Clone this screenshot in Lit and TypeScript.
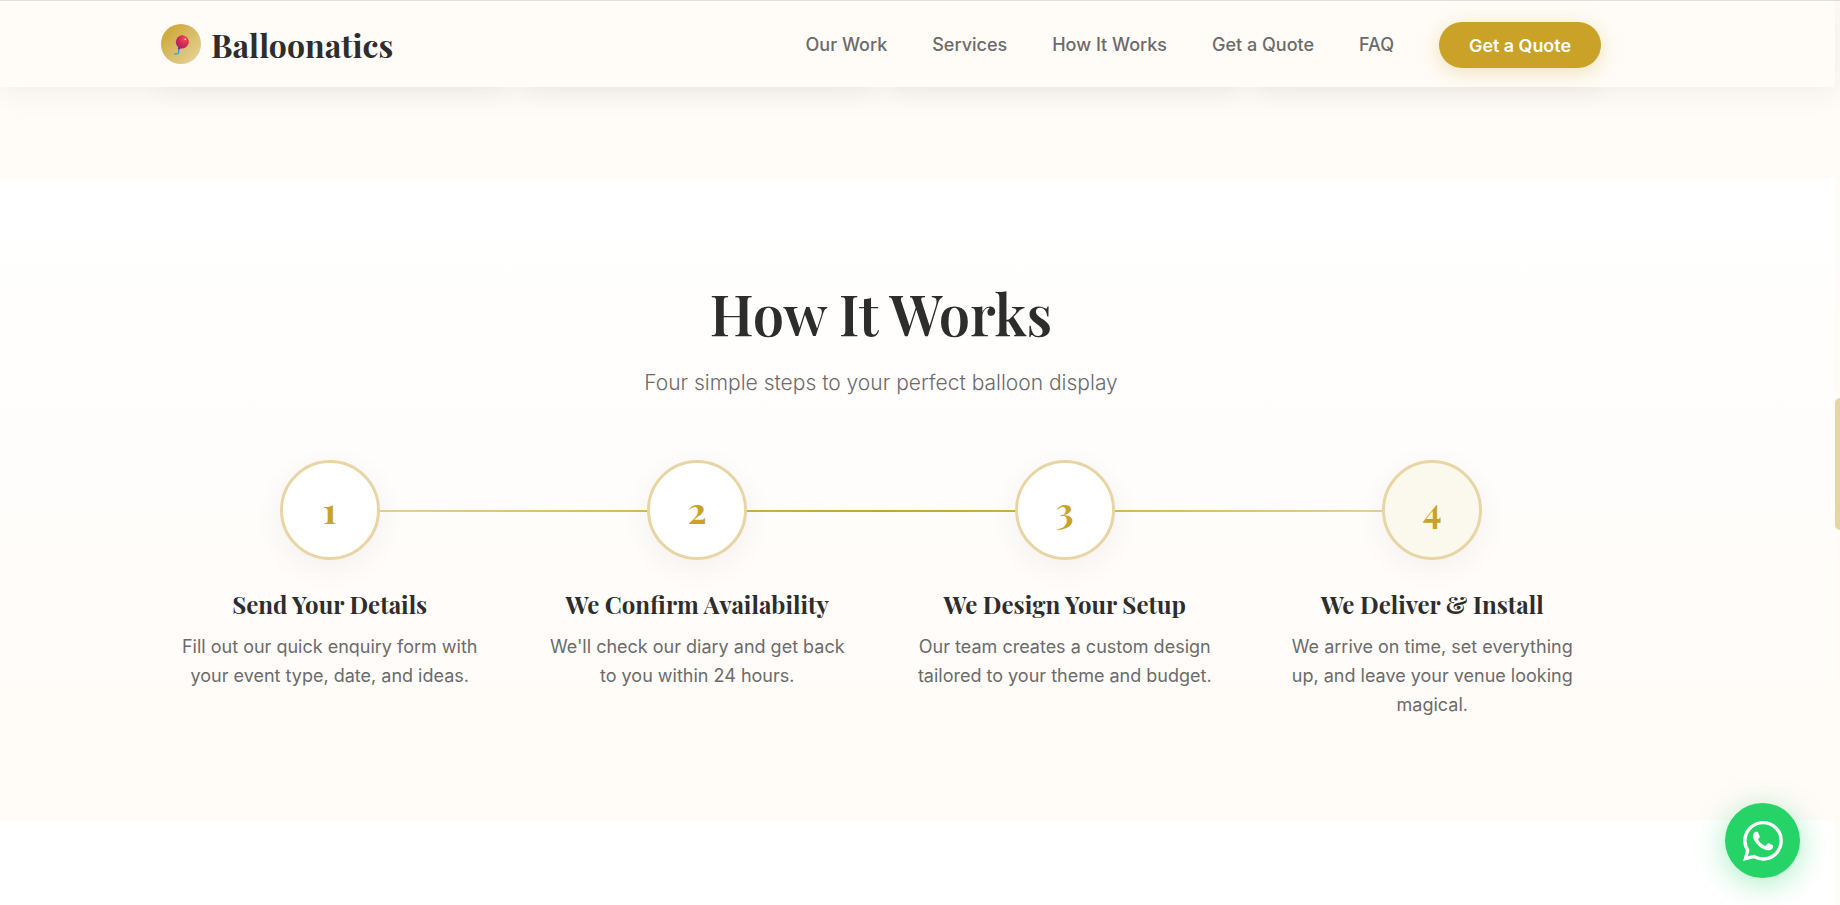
import { LitElement, html, css, svg } from "lit";
import { customElement } from "lit/decorators.js";

const LINKS = ["Our Work", "Services", "How It Works", "Get a Quote", "FAQ"];

const STEPS = [
  { n: "1", cls: "one", title: "Send Your Details", text: "Fill out our quick enquiry form with your event type, date, and ideas." },
  { n: "2", cls: "two", title: "We Confirm Availability", text: "We'll check our diary and get back to you within 24 hours." },
  { n: "3", cls: "three", title: "We Design Your Setup", text: "Our team creates a custom design tailored to your theme and budget." },
  { n: "4", cls: "four", title: "We Deliver & Install", text: "We arrive on time, set everything up, and leave your venue looking magical." },
];

const balloon = svg`
  <defs>
    <radialGradient id="b" cx="0.6" cy="0.25" r="0.8">
      <stop offset="0" stop-color="#f4485a"/><stop offset="0.5" stop-color="#d92a4c"/><stop offset="1" stop-color="#97257c"/>
    </radialGradient>
  </defs>
  <path d="M5.2 14.5 C4.6 16.5 5.6 18.6 4.4 19.6 C3.4 20.4 2 19.6 0.2 20" fill="none" stroke="#3b96f0" stroke-width="1.5"/>
  <path d="M4.6 12.2 L7 13.4 L6.4 15.4 L4 14.8Z" fill="#8c2a86"/>
  <ellipse cx="8.8" cy="7.2" rx="6.8" ry="7" fill="url(#b)" transform="rotate(18 8.8 7.2)"/>
  <ellipse cx="12" cy="4.4" rx="1.1" ry="0.9" fill="#ffd9dd"/>`;

@customElement("app-root")
export class AppRoot extends LitElement {
  static styles = css`
    :host {
      display: block; position: relative; height: 905px; overflow: hidden;
      background: #fff; font-family: Inter, sans-serif; color: #2d2d2d;
    }
    .page { display: flex; flex-direction: column; width: 1835px; height: 905px; }
    header {
      box-sizing: border-box; height: 87px; flex: none; position: relative; z-index: 2;
      display: flex; align-items: center; justify-content: space-between;
      padding: 0 234px 0 161px; border-top: 1px solid #dfdfdd; background: #fffcf7;
      box-shadow: 0 4px 30px rgba(45, 45, 45, 0.07);
    }
    .brand { display: flex; align-items: center; gap: 10px; height: 86px; }
    .mark {
      width: 40px; height: 40px; border-radius: 50%; display: grid; place-items: center;
      background: linear-gradient(135deg, #c9a227, #e8d5a3);
    }
    .mark svg { width: 16px; height: 20px; margin-top: 2px; margin-left: 1px; }
    .name, h2, h3, .num { font-family: "Playfair Display", "Liberation Serif", serif; font-weight: 700; }
    .name { font-size: 32px; line-height: 40px; padding-top: 2px; }
    nav { display: flex; align-items: center; gap: 45px; font-size: 18px; font-weight: 500; color: #6b6b6b; }
    .cta {
      box-sizing: border-box; width: 162px; height: 46px; border-radius: 23px; display: grid; place-items: center;
      margin-top: 2px; background: #c9a227; color: #fff; font-weight: 600; font-size: 17.9px;
      box-shadow: 0 4px 20px rgba(201, 162, 39, 0.3);
    }
    .prev {
      height: 91px; flex: none; background: #fffcf7; overflow: hidden;
      display: grid; grid-template-columns: repeat(4, 1fr); gap: 27px; padding: 0 234px 0 161px; box-sizing: border-box;
    }
    .card { height: 20px; margin-top: -30px; border-radius: 20px; box-shadow: 0 8px 30px rgba(45, 45, 45, 0.08); }
    .how {
      box-sizing: border-box; height: 642px; flex: none; padding: 97px 234px 0 161px; text-align: center;
      background: linear-gradient(180deg, #ffffff 0%, #fffbf7 100%);
    }
    h2 { margin: 0; font-size: 56px; font-weight: 600; line-height: 76px; }
    .sub { margin: 13px 0 0; font-size: 21px; font-weight: 300; line-height: 37px; color: #6b6b6b; }
    .steps {
      display: grid; grid-template-columns: repeat(4, 1fr); gap: 30px; margin-top: 59px; position: relative;
    }
    .line {
      position: absolute; top: 50px; left: 168px; right: 168px; height: 2px;
      background: linear-gradient(90deg, #e8d5a3, #c9a227, #e8d5a3);
    }
    .step { display: flex; flex-direction: column; align-items: center; position: relative; }
    .circle {
      box-sizing: border-box; width: 100px; height: 100px; border-radius: 50%; border: 3px solid #e8d5a3; background: #fff;
      display: grid; place-items: center; color: #c9a227; box-shadow: 0 8px 30px rgba(45, 45, 45, 0.06);
    }
    .circle.four { background: #fbf9ee; }
    .num { font-size: 36px; line-height: 48px; padding-bottom: 2px; }
    h3 { margin: 29px 0 0; font-size: 24px; line-height: 30px; white-space: nowrap; }
    .step p { margin: 13px 0 0; padding: 0 18px; font-size: 18px; line-height: 29.07px; color: #6b6b6b; }
    .track {
      box-sizing: border-box; border-top: 1px solid #dfdfdd;
      position: absolute; top: 0; right: 0; width: 5px; height: 905px; background: #fffcf7;
    }
    .thumb { margin-top: 397px; height: 132px; border-radius: 5px 0 0 5px; background: #e8d5a3; }
    .chat {
      position: absolute; left: 1725px; top: 803px; width: 75px; height: 75px; border-radius: 50%; z-index: 3;
      background: #25d366; display: grid; place-items: center; box-shadow: 0 5px 30px rgba(37, 211, 102, 0.4);
    }
    .chat svg { width: 40px; height: 40px; fill: #fff; }
  `;

  render() {
    return html`
      <div class="page">
        <header>
          <div class="brand">
            <div class="mark"><svg viewBox="0 0 17 21">${balloon}</svg></div>
            <div class="name">Balloonatics</div>
          </div>
          <nav>${LINKS.map((l) => html`<span>${l}</span>`)}<span class="cta">Get a Quote</span></nav>
        </header>
        <div class="prev">${STEPS.map(() => html`<div class="card"></div>`)}</div>
        <section class="how">
          <h2>How It Works</h2>
          <p class="sub">Four simple steps to your perfect balloon display</p>
          <div class="steps">
            <div class="line"></div>
            ${STEPS.map((s) => html`
              <div class="step">
                <div class="circle ${s.cls}"><span class="num">${s.n}</span></div>
                <h3>${s.title}</h3>
                <p>${s.text}</p>
              </div>`)}
          </div>
        </section>
      </div>
      <div class="track"><div class="thumb"></div></div>
      <div class="chat">
        <svg viewBox="0 0 24 24"><path d="M17.472 14.382c-.297-.149-1.758-.867-2.03-.967-.273-.099-.471-.148-.67.15-.197.297-.767.966-.94 1.164-.173.199-.347.223-.644.075-.297-.15-1.255-.463-2.39-1.475-.883-.788-1.48-1.761-1.653-2.059-.173-.297-.018-.458.13-.606.134-.133.298-.347.446-.52.149-.174.198-.298.298-.497.099-.198.05-.371-.025-.52-.075-.149-.669-1.612-.916-2.207-.242-.579-.487-.5-.669-.51-.173-.008-.371-.01-.57-.01-.198 0-.52.074-.792.372-.272.297-1.04 1.016-1.04 2.479 0 1.462 1.065 2.875 1.213 3.074.149.198 2.096 3.2 5.077 4.487.709.306 1.262.489 1.694.625.712.227 1.36.195 1.871.118.571-.085 1.758-.719 2.006-1.413.248-.694.248-1.289.173-1.413-.074-.124-.272-.198-.57-.347m-5.421 7.403h-.004a9.87 9.87 0 01-5.031-1.378l-.361-.214-3.741.982.998-3.648-.235-.374a9.86 9.86 0 01-1.51-5.26c.001-5.45 4.436-9.884 9.888-9.884 2.64 0 5.122 1.03 6.988 2.898a9.825 9.825 0 012.893 6.994c-.003 5.45-4.437 9.884-9.885 9.884m8.413-18.297A11.815 11.815 0 0012.05 0C5.495 0 .16 5.335.157 11.892c0 2.096.547 4.142 1.588 5.945L.057 24l6.305-1.654a11.882 11.882 0 005.683 1.448h.005c6.554 0 11.89-5.335 11.893-11.893a11.821 11.821 0 00-3.48-8.413z"/></svg>
      </div>`;
  }
}
